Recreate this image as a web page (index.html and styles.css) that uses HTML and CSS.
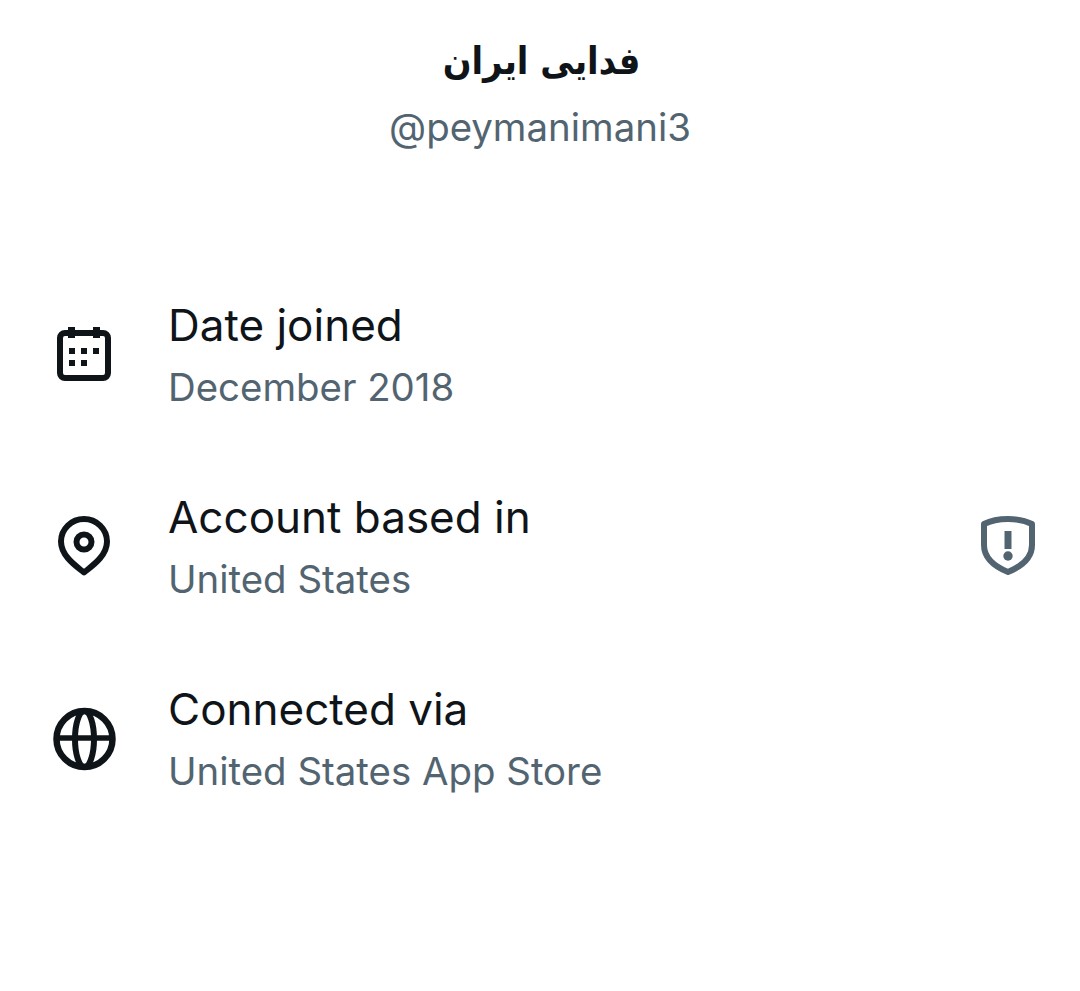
FILE: index.html
```html
<!DOCTYPE html>
<html lang="en">
<head>
  <meta charset="UTF-8" />
  <meta name="viewport" content="width=device-width, initial-scale=1.0"/>
  <title>About this account</title>
  <link rel="stylesheet" href="styles.css">
</head>
<body>
  <div class="header">
    <h1 class="name" dir="rtl" lang="fa">فدایی ایران</h1>
    <div class="handle">@peymanimani3</div>
  </div>

  <div class="list">
    <div class="row">
      <svg class="icon" viewBox="0 0 66 70">
        <rect x="8" y="10" width="48" height="45" rx="5" fill="none" stroke="#0f1419" stroke-width="6"/>
        <path d="M16 4h7v11h-7zM41 4h7v11h-7z" fill="#0f1419"/>
        <path d="M17 25h6v6h-6zM29 25h6v6h-6zM41 25h6v6h-6zM17 37h6v6h-6zM29 37h6v6h-6z" fill="#0f1419"/>
      </svg>
      <div class="text">
        <div class="title">Date joined</div>
        <div class="sub">December 2018</div>
      </div>
    </div>

    <div class="row">
      <svg class="icon" viewBox="0 0 66 70">
        <path d="M32 57.500 C24 51 9 41 9 26.500 C9 14 19.500 4 32 4 C44.500 4 55 14 55 26.500 C55 41 40 51 32 57.500Z" fill="none" stroke="#0f1419" stroke-width="6" stroke-linejoin="round"/>
        <circle cx="32" cy="27" r="7.500" fill="none" stroke="#0f1419" stroke-width="6"/>
      </svg>
      <div class="text">
        <div class="title">Account based in</div>
        <div class="sub">United States</div>
      </div>
      <svg class="shield" viewBox="0 0 54 70">
        <path d="M27 4 C36 4 44 5.500 51 9 V30 C51 44 38 52.500 27 57 C16 52.500 3 44 3 30 V9 C10 5.500 18 4 27 4Z" fill="none" stroke="#536471" stroke-width="6" stroke-linejoin="round"/>
        <path d="M23.500 16h7v18h-7z" fill="#536471"/>
        <circle cx="27" cy="41" r="4.700" fill="#536471"/>
      </svg>
    </div>

    <div class="row">
      <svg class="icon" viewBox="0 0 66 70">
        <circle cx="32.500" cy="32" r="28" fill="none" stroke="#0f1419" stroke-width="6.500"/>
        <ellipse cx="32.500" cy="32" rx="9.500" ry="28" fill="none" stroke="#0f1419" stroke-width="6"/>
        <path d="M4 31h57" stroke="#0f1419" stroke-width="5.500"/>
      </svg>
      <div class="text">
        <div class="title">Connected via</div>
        <div class="sub">United States App Store</div>
      </div>
    </div>
  </div>
</body>
</html>
```

FILE: styles.css
```css
body {
  background: #fff;
  color: #0f1419;
  font-family: 'Inter', 'Liberation Sans', sans-serif;
  margin: 0;
  height: 991px;
  overflow: hidden;
}

.header {
  text-align: center;
  padding-top: 36px;
}

.name {
  font-family: 'DejaVu Sans Condensed', 'DejaVu Sans', sans-serif;
  font-size: 37.6px;
  font-weight: bold;
  line-height: 50px;
  margin: 0;
  padding-left: 3px;
}

.handle {
  color: #536471;
  font-size: 38.4px;
  line-height: 50px;
  margin-top: 16px;
}

.list {
  padding-top: 144px;
  display: flex;
  flex-direction: column;
  gap: 68px;
}

.row {
  display: flex;
  align-items: center;
  padding: 0 45px 0 52px;
}

.icon {
  width: 66px;
  height: 70px;
  margin-right: 50px;
  flex-shrink: 0;
}

.text {
  flex: 1;
}

.title {
  font-size: 44px;
  line-height: 58px;
}

.sub {
  color: #536471;
  font-size: 38.4px;
  line-height: 66px;
}

.shield {
  width: 54px;
  height: 70px;
}
```
